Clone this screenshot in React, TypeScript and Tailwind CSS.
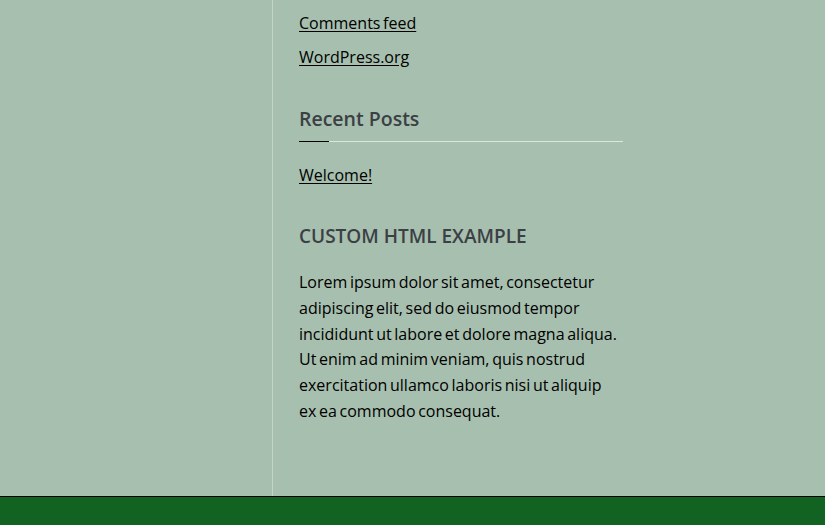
import React from "react";

const links = ["Comments feed", "WordPress.org"];

export default function App() {
  return (
    <div
      className="h-[525px] w-[825px] overflow-hidden bg-[#a7bfae] flex flex-col text-black"
      style={{ fontFamily: '"Open Sans", "Liberation Sans", sans-serif' }}
    >
      <div className="flex flex-1 min-h-0">
        <div className="w-[273px] shrink-0 border-r border-[#c3d4c7]" />
        <aside className="w-[324px] pl-[26px] box-content text-[16px] [word-spacing:-1.5px]">
          {/* Meta links */}
          <ul className="pt-[12px]">
            {links.map((l) => (
              <li key={l} className="h-[34px] leading-[22px]">
                <a href="#" className="underline underline-offset-2">
                  {l}
                </a>
              </li>
            ))}
          </ul>

          {/* Recent posts */}
          <section className="mt-[27px]">
            <h2 className="text-[19.5px] font-semibold text-[#3b4045] leading-[24px] [word-spacing:0]">
              Recent Posts
            </h2>
            <div className="mt-[10px] flex h-px">
              <div className="w-[30px] bg-black" />
              <div className="flex-1 bg-[#dbe6dd]" />
            </div>
            <a href="#" className="mt-[22px] block leading-[22px] underline underline-offset-2">
              Welcome!
            </a>
          </section>

          {/* Custom HTML */}
          <section className="mt-[38px]">
            <h2 className="text-[19px] font-semibold uppercase text-[#3b4045] leading-[24px] [word-spacing:0]">
              Custom HTML Example
            </h2>
            <p className="mt-[22px] w-[320px] leading-[25.8px]">
              Lorem ipsum dolor sit amet, consectetur adipiscing elit, sed do eiusmod tempor
              incididunt ut labore et dolore magna aliqua. Ut enim ad minim veniam, quis nostrud
              exercitation ullamco laboris nisi ut aliquip ex ea commodo consequat.
            </p>
          </section>
        </aside>
      </div>
      <footer className="h-[29px] shrink-0 bg-[#126322] border-t border-black" />
    </div>
  );
}
